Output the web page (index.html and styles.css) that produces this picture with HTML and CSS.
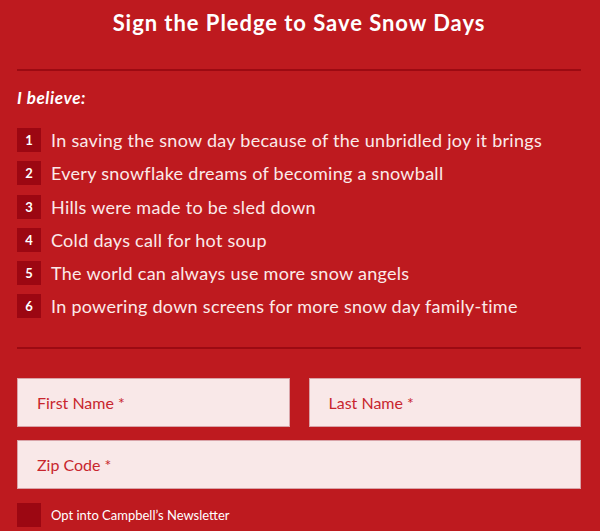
FILE: index.html
```html
<!DOCTYPE html>
<html lang="en">
<head>
  <meta charset="UTF-8">
  <title>Sign the Pledge to Save Snow Days</title>
  <link rel="stylesheet" href="styles.css">
</head>
<body>
  <div class="pledge">
    <h2 class="pledge-title">Sign the Pledge to Save Snow Days</h2>
    <hr class="divider">
    <p class="believe">I believe:</p>
    <ol class="beliefs">
      <li><span class="num">1</span>In saving the snow day because of the unbridled joy it brings</li>
      <li><span class="num">2</span>Every snowflake dreams of becoming a snowball</li>
      <li><span class="num">3</span>Hills were made to be sled down</li>
      <li><span class="num">4</span>Cold days call for hot soup</li>
      <li><span class="num">5</span>The world can always use more snow angels</li>
      <li><span class="num">6</span>In powering down screens for more snow day family-time</li>
    </ol>
    <hr class="divider">
    <form class="pledge-form">
      <div class="row">
        <input type="text" placeholder="First Name *">
        <input type="text" placeholder="Last Name *">
      </div>
      <div class="row">
        <input type="text" placeholder="Zip Code *">
      </div>
      <label class="optin"><span class="box"></span>Opt into Campbell’s Newsletter</label>
    </form>
  </div>
</body>
</html>
```

FILE: styles.css
```css
body {
  margin: 0;
  background-color: #be1a1f;
  font-family: Lato, "Open Sans", sans-serif;
  color: #fbeaea;
}

.pledge {
  padding: 9px 19px 0 17px;
}

.pledge-title {
  margin: 0;
  text-align: center;
  font-size: 22px;
  font-weight: 700;
  letter-spacing: 0.95px;
  color: #fff;
  line-height: 28px;
}

.divider {
  border: none;
  height: 2px;
  background-color: #9c0a12;
  margin: 32px 0 0 0;
}

.believe {
  margin: 16px 0 0 0;
  font-size: 17px;
  font-weight: 700;
  font-style: italic;
  letter-spacing: 0.6px;
  color: #fff;
}

.beliefs {
  list-style: none;
  margin: 20px 0 0 0;
  padding: 0;
  display: flex;
  flex-direction: column;
  gap: 9.3px;
}

.beliefs li {
  display: flex;
  align-items: center;
  gap: 10px;
  font-size: 18px;
  line-height: 24px;
  letter-spacing: 0.28px;
}

.num {
  width: 24px;
  height: 24px;
  flex: none;
  background-color: #9c0712;
  color: #fff;
  font-size: 13px;
  font-weight: 700;
  letter-spacing: 0;
  display: flex;
  align-items: center;
  justify-content: center;
}

.beliefs + .divider {
  margin-top: 29px;
}

.pledge-form {
  margin-top: 29px;
}

.row {
  display: flex;
  gap: 19px;
  margin-bottom: 13px;
}

.row input {
  flex: 1;
  min-width: 0;
  height: 49px;
  box-sizing: border-box;
  border: 1px solid #d9a3a8;
  background-color: #f9e8e8;
  padding: 0 19px;
  font-family: Lato, "Open Sans", sans-serif;
  font-size: 16px;
  color: #c4222a;
}

.row input::placeholder {
  color: #c8262e;
}

.optin {
  display: flex;
  align-items: center;
  gap: 10px;
  margin-top: 14px;
  font-size: 13px;
  color: #fff;
}

.box {
  width: 24px;
  height: 24px;
  background-color: #9c0712;
}
```
